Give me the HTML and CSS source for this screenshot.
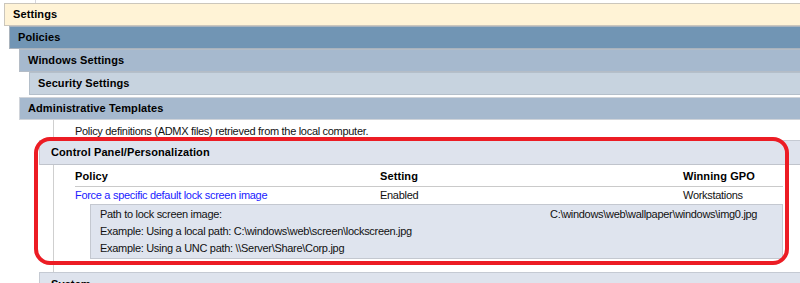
FILE: index.html
```html
<!DOCTYPE html>
<html lang="en">
<head>
  <meta charset="UTF-8">
  <title>Settings</title>
  <link rel="stylesheet" href="styles.css">
</head>
<body>
  <div class="report">
    <div class="top"></div>
    <div class="section lvl-settings">
      <div class="bar bar-settings">Settings</div>
      <div class="section lvl-policies">
        <div class="bar bar-policies">Policies</div>
        <div class="section lvl-windows">
          <div class="bar bar-windows">Windows Settings</div>
          <div class="section lvl-security">
            <div class="bar bar-security">Security Settings</div>
          </div>
        </div>
        <div class="section lvl-admin">
          <div class="bar bar-admin">Administrative Templates</div>
          <div class="admin-body">
            <p class="note">Policy definitions (ADMX files) retrieved from the local computer.</p>
            <div class="category">
              <div class="bar bar-category">Control Panel/Personalization</div>
              <div class="policy-table">
                <div class="row head">
                  <span>Policy</span>
                  <span>Setting</span>
                  <span>Winning GPO</span>
                </div>
                <div class="row">
                  <span class="link">Force a specific default lock screen image</span>
                  <span>Enabled</span>
                  <span>Workstations</span>
                </div>
                <div class="details">
                  <div class="detail"><span>Path to lock screen image:</span><span>C:\windows\web\wallpaper\windows\img0.jpg</span></div>
                  <div class="detail"><span>Example: Using a local path: C:\windows\web\screen\lockscreen.jpg</span></div>
                  <div class="detail"><span>Example: Using a UNC path: \\Server\Share\Corp.jpg</span></div>
                </div>
              </div>
            </div>
            <div class="category">
              <div class="bar bar-category">System</div>
            </div>
          </div>
        </div>
      </div>
    </div>
    <div class="highlight"></div>
  </div>
</body>
</html>
```

FILE: styles.css
```css
body {
  margin: 0;
  overflow: hidden;
  background-color: white;
  font-family: "Liberation Sans", Arial, sans-serif;
  font-size: 11px;
  color: #111;
}
.report {
  position: relative;
  width: 800px;
  height: 283px;
  overflow: hidden;
}
.top {
  height: 3px;
  margin-left: 35px;
  border-left: 1px solid #d6d6dc;
}
.bar {
  height: 21px;
  line-height: 21px;
  padding-left: 8px;
  font-weight: bold;
  color: #000;
  letter-spacing: 0.1px;
  border: 1px solid #b9b9b9;
  border-right: none;
}
.lvl-settings { margin-left: 4px; }
.lvl-policies { margin-left: 5px; }
.lvl-windows { margin-left: 10px; }
.lvl-security { margin-left: 10px; }
.lvl-admin { margin-left: 10px; margin-top: 2px; }
.bar-settings { background-color: #fff3d6; border-color: #cbc6bc; }
.bar-policies { background-color: #7195b4; border-color: #a9b3bd; }
.bar-windows { background-color: #a6b9ce; border-color: #b4bcc6; }
.bar-security { background-color: #c7d3df; border-color: #b4bfca; }
.bar-admin { background-color: #a6b9ce; border-color: #d0d4da; }
.admin-body {
  margin-left: 34px;
  border-left: 1px solid #cfcfcf;
  padding-left: 21px;
}
.note {
  margin: 0;
  padding-top: 3px;
  line-height: 17px;
  letter-spacing: -0.3px;
}
.category {
  margin-left: -36px;
}
.bar-category {
  height: 23px;
  line-height: 23px;
  padding-left: 11px;
  background-color: #dee3ed;
  border-color: #c5cad3;
  border-bottom-color: #c0c4cc;
}
.policy-table {
  margin-left: 36px;
  margin-right: 17px;
  padding-bottom: 13px;
}
.row {
  display: grid;
  grid-template-columns: 305px 303px auto;
  line-height: 17px;
  letter-spacing: -0.3px;
}
.row.head {
  height: 21px;
  line-height: 23px;
  font-weight: bold;
  color: #000;
  letter-spacing: 0.1px;
  border-bottom: 1px solid #cacaca;
}
.link {
  color: #1a1aff;
}
.details {
  margin-left: 15px;
  padding: 1px 0 1px 9px;
  background-color: #dfe4ee;
  border: 1px solid #c4c8d0;
}
.detail {
  display: grid;
  grid-template-columns: 450px auto;
  line-height: 17px;
  letter-spacing: -0.3px;
}
.highlight {
  position: absolute;
  left: 34px;
  top: 137px;
  width: 755px;
  height: 128px;
  box-sizing: border-box;
  border: 4px solid #ec1c24;
  border-radius: 16px;
}
```
